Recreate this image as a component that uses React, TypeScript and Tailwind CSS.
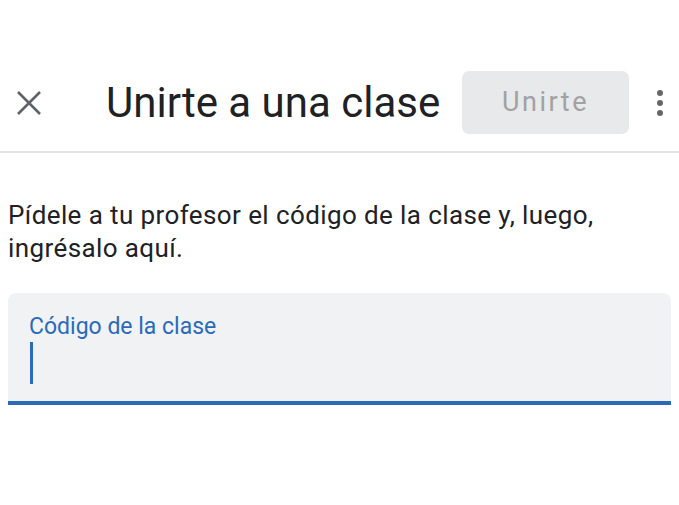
export default function App() {
  return (
    <div className="min-h-[505px] w-[679px] bg-white font-['Roboto',sans-serif]">
      <div className="border-b-2 border-[#e2e3e4] pt-[71px] pb-[17px]">
        <div className="flex h-[63px] items-center">
          <svg className="ml-[17px] h-[24px] w-[24px] text-[#5f6368]" viewBox="0 0 24 24">
            <path d="M1 1 23 23M23 1 1 23" stroke="currentColor" strokeWidth="2.6" fill="none" />
          </svg>
          <h1 className="ml-[65px] text-[42px] leading-none text-[#202124]">Unirte a una clase</h1>
          <button
            type="button"
            className="ml-auto h-[63px] w-[167px] rounded-[7px] bg-[#e8e9ea] text-[27px] tracking-[2.5px] text-[#a2a2a2]"
          >
            Unirte
          </button>
          <div className="ml-[28px] mr-[16px] flex flex-col gap-[4px]">
            <span className="h-[6px] w-[6px] rounded-full bg-[#666]" />
            <span className="h-[6px] w-[6px] rounded-full bg-[#666]" />
            <span className="h-[6px] w-[6px] rounded-full bg-[#666]" />
          </div>
        </div>
      </div>
      <p className="mt-[46px] px-[8px] text-[26px] leading-[33px] tracking-[0.4px] text-[#202124]">
        Pídele a tu profesor el código de la clase y, luego,
        <br />
        ingrésalo aquí.
      </p>
      <div className="mx-[8px] mt-[28px] h-[112px] rounded-t-[8px] border-b-[4px] border-[#2a6bb9] bg-[#f1f2f4] pt-[20px] pl-[21px]">
        <div className="text-[23px] leading-[28px] text-[#2a6bb9]">Código de la clase</div>
        <div className="mt-[1px] ml-[1px] h-[42px] w-[3px] bg-[#2a6bb9]" />
      </div>
    </div>
  );
}
